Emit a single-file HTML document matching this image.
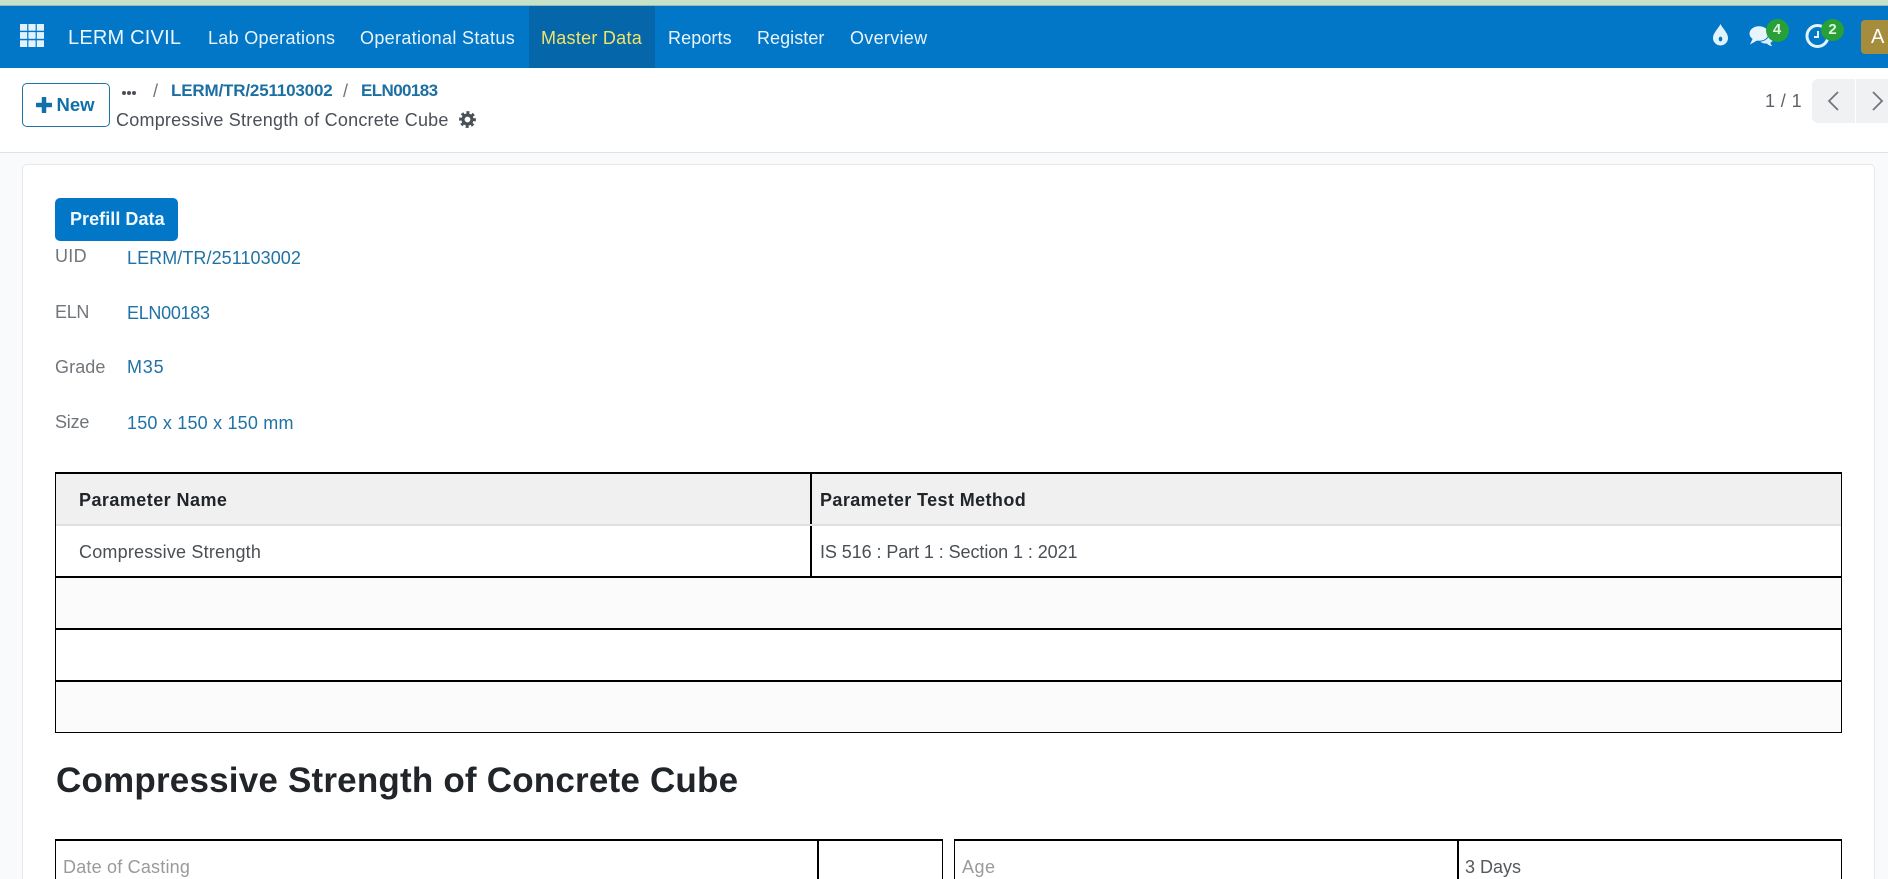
<!DOCTYPE html>
<html><head><meta charset="utf-8"><title>Compressive Strength of Concrete Cube</title>
<style>
html,body{margin:0;padding:0;width:1888px;height:879px;overflow:hidden;background:#f9fafb}
body{position:relative;font-family:"Liberation Sans",Arial,sans-serif}
.a{position:absolute}
.t{position:absolute;white-space:nowrap;line-height:24px;height:24px}
.nav{font-size:18px;color:#e8f4fc}
.lab{font-size:18px;color:#71767b}
.val{font-size:18px;color:#1f72a6}
.k{background:#000;position:absolute}
</style></head><body>
<div class="a" style="left:0;top:0;width:1888px;height:5px;background:#c6e2c9"></div>
<div class="a" style="left:0;top:5px;width:1888px;height:1px;background:#8fbfc4"></div>
<div class="a" style="left:0;top:6px;width:1888px;height:62px;background:#0277c7"></div>
<div class="a" style="left:529px;top:6px;width:126px;height:62px;background:#0567a9"></div>
<svg class="a" style="left:20px;top:24px" width="24" height="23" viewBox="0 0 24 23"><g fill="#e2f2fc"><rect x="0" y="0" width="7.200" height="6.700"/><rect x="8.400" y="0" width="7.200" height="6.700"/><rect x="16.800" y="0" width="7.200" height="6.700"/><rect x="0" y="8.100" width="7.200" height="6.700"/><rect x="8.400" y="8.100" width="7.200" height="6.700"/><rect x="16.800" y="8.100" width="7.200" height="6.700"/><rect x="0" y="16.300" width="7.200" height="6.700"/><rect x="8.400" y="16.300" width="7.200" height="6.700"/><rect x="16.800" y="16.300" width="7.200" height="6.700"/></g></svg>
<div class="t" style="left:68px;top:26px;font-size:20px;color:#eef7fd;letter-spacing:.2px">LERM CIVIL</div>
<div class="t nav" style="left:208px;top:26px;letter-spacing:.3px">Lab Operations</div>
<div class="t nav" style="left:360px;top:26px;letter-spacing:.33px">Operational Status</div>
<div class="t nav" style="left:541px;top:26px;color:#f0e36a;letter-spacing:.27px">Master Data</div>
<div class="t nav" style="left:668px;top:26px;letter-spacing:.1px">Reports</div>
<div class="t nav" style="left:757px;top:26px;letter-spacing:.05px">Register</div>
<div class="t nav" style="left:850px;top:26px;letter-spacing:.3px">Overview</div>

<svg class="a" style="left:1712px;top:23px" width="17" height="23" viewBox="0 0 17 23"><path d="M8.500 1C11 6 16 10 16 15a7.500 7.500 0 0 1-15 0C1 10 6 6 8.500 1Z" fill="#e3f3fc"/><ellipse cx="8.500" cy="16" rx="1.800" ry="2.400" fill="#0277c7"/></svg>
<svg class="a" style="left:1748px;top:25px" width="28" height="23" viewBox="0 0 28 23"><path d="M17 9c4.500 0 8 2.300 8 5 0 1.600-1 3-2.600 3.800.2 1.200 1 2.600 2 3.400-2.200-.2-4.300-1.300-5.500-2.600-3.500.1-6.600-1.200-7.600-3.200Z" fill="#d9eefa"/><ellipse cx="11" cy="8.500" rx="10" ry="7.800" fill="#e6f4fc" stroke="#0277c7" stroke-width="1"/><path d="M5 13 2 19.500 10 15Z" fill="#e6f4fc"/></svg>
<div class="a" style="left:1765.500px;top:19px;width:23px;height:23px;border-radius:50%;background:#28a038"></div>
<div class="t" style="left:1765.500px;top:18px;width:23px;text-align:center;font-size:15px;font-weight:bold;color:#dff3e0">4</div>
<svg class="a" style="left:1805px;top:23px" width="26" height="26" viewBox="0 0 26 26"><circle cx="12.500" cy="13" r="10.500" fill="none" stroke="#e3f3fc" stroke-width="3"/><path d="M13 8v6H9" fill="none" stroke="#e3f3fc" stroke-width="2"/></svg>
<div class="a" style="left:1821px;top:19px;width:23px;height:22px;border-radius:50%;background:#28a038"></div>
<div class="t" style="left:1821px;top:18px;width:23px;text-align:center;font-size:15px;font-weight:bold;color:#dff3e0">2</div>
<div class="a" style="left:1861px;top:20px;width:40px;height:34px;border-radius:4px;background:#a68d3e"></div>
<div class="t" style="left:1871px;top:25px;font-size:20px;color:#fff">A</div>

<div class="a" style="left:0;top:68px;width:1888px;height:84px;background:#fff"></div>
<div class="a" style="left:0;top:152px;width:1888px;height:1px;background:#dfe2e5"></div>

<div class="a" style="left:22px;top:83px;width:86px;height:42px;border:1px solid #1d74a8;border-radius:5px;background:#fff"></div>
<svg class="a" style="left:36px;top:97px" width="16" height="16" viewBox="0 0 16 16"><path d="M8 1v14M1 8h14" stroke="#1270a8" stroke-width="4.500" stroke-linecap="round" fill="none"/></svg>
<div class="t" style="left:56.500px;top:93px;font-size:18.500px;font-weight:bold;color:#1270a8">New</div>

<svg class="a" style="left:122px;top:90.500px" width="14" height="5"><circle cx="2" cy="2" r="2" fill="#495057"/><circle cx="7" cy="2" r="2" fill="#495057"/><circle cx="12" cy="2" r="2" fill="#495057"/></svg>
<div class="t" style="left:153px;top:79px;font-size:18px;color:#6c757d">/</div>
<div class="t" style="left:171px;top:79px;font-size:17px;font-weight:bold;color:#1c6fa3;letter-spacing:-.17px">LERM/TR/251103002</div>
<div class="t" style="left:343px;top:79px;font-size:18px;color:#6c757d">/</div>
<div class="t" style="left:361px;top:79px;font-size:17px;font-weight:bold;color:#1c6fa3;letter-spacing:-.6px">ELN00183</div>
<div class="t" style="left:116px;top:108px;font-size:18px;color:#495057;letter-spacing:.23px">Compressive Strength of Concrete Cube</div>
<svg class="a" style="left:459px;top:111px" width="17" height="17" viewBox="0 0 17 17"><circle cx="8.500" cy="8.500" r="6.800" fill="none" stroke="#495057" stroke-width="3.200" stroke-dasharray="2.800 2.540" transform="rotate(-10 8.500 8.500)"/><circle cx="8.500" cy="8.500" r="4.500" fill="none" stroke="#495057" stroke-width="3.200"/></svg>

<div class="t" style="left:1765px;top:89px;font-size:18px;color:#5c6268;letter-spacing:.4px">1 / 1</div>
<div class="a" style="left:1812px;top:79px;width:43px;height:44px;background:#eff1f3;border-radius:6px 0 0 6px"></div>
<div class="a" style="left:1856px;top:79px;width:32px;height:44px;background:#eff1f3"></div>
<svg class="a" style="left:1827px;top:90px" width="14" height="22" viewBox="0 0 14 22"><path d="M11 2 2 11l9 9" fill="none" stroke="#71767b" stroke-width="1.800"/></svg>
<svg class="a" style="left:1870px;top:90px" width="14" height="22" viewBox="0 0 14 22"><path d="M3 2l9 9-9 9" fill="none" stroke="#71767b" stroke-width="1.800"/></svg>

<div class="a" style="left:22px;top:164px;width:1851px;height:730px;background:#fff;border:1px solid #e6e8eb;border-radius:5px"></div>

<div class="a" style="left:55px;top:198px;width:123px;height:43px;background:#0277c7;border-radius:5px"></div>
<div class="t" style="left:70px;top:207px;font-size:18px;font-weight:bold;color:#f2f9fd;letter-spacing:.05px">Prefill Data</div>

<div class="t lab" style="left:55px;top:244px;letter-spacing:.3px">UID</div>
<div class="t lab" style="left:55px;top:300px;letter-spacing:-.3px">ELN</div>
<div class="t lab" style="left:55px;top:355px;letter-spacing:.1px">Grade</div>
<div class="t lab" style="left:55px;top:410px;letter-spacing:-.2px">Size</div>
<div class="t val" style="left:127px;top:246px;letter-spacing:.07px">LERM/TR/251103002</div>
<div class="t val" style="left:127px;top:301px;letter-spacing:-.3px">ELN00183</div>
<div class="t val" style="left:127px;top:355px;letter-spacing:.8px">M35</div>
<div class="t val" style="left:127px;top:411px;letter-spacing:.2px">150 x 150 x 150 mm</div>

<div class="a" style="left:56px;top:473px;width:1785px;height:52px;background:#f0f0f0"></div>
<div class="a" style="left:56px;top:524px;width:1785px;height:2px;background:#dee0e2"></div>
<div class="a" style="left:56px;top:578px;width:1785px;height:51px;background:#fbfbfb"></div>
<div class="a" style="left:56px;top:682px;width:1785px;height:50px;background:#fbfbfb"></div>
<div class="k" style="left:55px;top:472px;width:1787px;height:2px"></div>
<div class="k" style="left:55px;top:576px;width:1787px;height:2px"></div>
<div class="k" style="left:55px;top:628px;width:1787px;height:2px"></div>
<div class="k" style="left:55px;top:680px;width:1787px;height:2px"></div>
<div class="k" style="left:55px;top:732px;width:1787px;height:1px"></div>
<div class="k" style="left:55px;top:472px;width:1px;height:261px"></div>
<div class="k" style="left:1841px;top:472px;width:1px;height:261px"></div>
<div class="k" style="left:810px;top:472px;width:2px;height:52px"></div>
<div class="k" style="left:810px;top:526px;width:2px;height:50px"></div>
<div class="t" style="left:79px;top:488px;font-size:18px;font-weight:bold;color:#212529;letter-spacing:.45px">Parameter Name</div>
<div class="t" style="left:820px;top:488px;font-size:18px;font-weight:bold;color:#212529;letter-spacing:.4px">Parameter Test Method</div>
<div class="t" style="left:79px;top:540px;font-size:18px;color:#4a4f55;letter-spacing:.2px">Compressive Strength</div>
<div class="t" style="left:820px;top:540px;font-size:18px;color:#4a4f55;letter-spacing:-.08px">IS 516 : Part 1 : Section 1 : 2021</div>

<div class="t" style="left:56px;top:761px;height:40px;line-height:40px;font-size:35px;font-weight:bold;color:#212529;letter-spacing:.2px">Compressive Strength of Concrete Cube</div>

<div class="k" style="left:55px;top:839px;width:888px;height:2px"></div>
<div class="k" style="left:55px;top:839px;width:1px;height:40px"></div>
<div class="k" style="left:817px;top:839px;width:2px;height:40px"></div>
<div class="k" style="left:942px;top:839px;width:1px;height:40px"></div>
<div class="k" style="left:954px;top:839px;width:888px;height:2px"></div>
<div class="k" style="left:954px;top:839px;width:1px;height:40px"></div>
<div class="k" style="left:1457px;top:839px;width:2px;height:40px"></div>
<div class="k" style="left:1841px;top:839px;width:1px;height:40px"></div>
<div class="t" style="left:63px;top:855px;font-size:18px;color:#9a9a9a;letter-spacing:.2px">Date of Casting</div>
<div class="t" style="left:962px;top:855px;font-size:18px;color:#9a9a9a;letter-spacing:.5px">Age</div>
<div class="t" style="left:1465px;top:855px;font-size:18px;color:#55595e">3 Days</div>
</body></html>
